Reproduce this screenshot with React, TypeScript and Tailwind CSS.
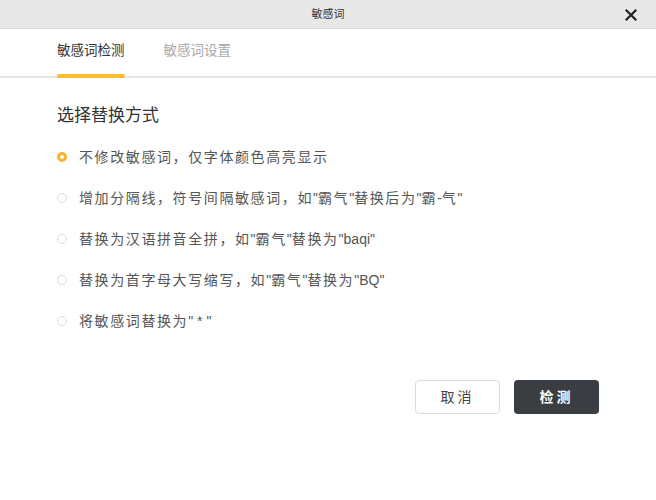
import { useState } from "react";

const font = { fontFamily: "'Liberation Sans', 'Noto Sans CJK SC', sans-serif" };

const options = [
  "不修改敏感词，仅字体颜色高亮显示",
  "增加分隔线，符号间隔敏感词，如\"霸气\"替换后为\"霸-气\"",
  "替换为汉语拼音全拼，如\"霸气\"替换为\"baqi\"",
  "替换为首字母大写缩写，如\"霸气\"替换为\"BQ\"",
  "将敏感词替换为\" * \"",
];

// latin runs keep normal spacing, CJK runs are spaced out a little
function Spaced({ text }: { text: string }) {
  return (
    <>
      {text.split(/([\x20-\x7e]+)/).map((part, i) =>
        /^[\x20-\x7e]+$/.test(part) ? (
          <span key={i} className="tracking-normal">{part}</span>
        ) : (
          <span key={i} className="tracking-[1.6px]">{part}</span>
        )
      )}
    </>
  );
}

export default function App() {
  const [tab, setTab] = useState(0);
  const [picked, setPicked] = useState(0);

  return (
    <div className="w-[656px] h-[500px] bg-white flex flex-col" style={font}>
      {/* title bar */}
      <div className="h-[29px] bg-[#e8e8e8] border-b border-[#d6d6d6] flex items-center justify-center relative">
        <span className="text-[11px] text-[#333]">敏感词</span>
        <button className="absolute right-[17px] top-[7px] w-4 h-4 flex items-center justify-center">
          <svg viewBox="0 0 12 12" className="w-[12px] h-[12px]">
            <path d="M1.5 1.5 L10.5 10.5 M10.5 1.5 L1.5 10.5" stroke="#222" strokeWidth="2.2" strokeLinecap="square" />
          </svg>
        </button>
      </div>

      {/* tabs */}
      <div className="flex gap-[39px] px-[57px] border-b-2 border-[#e6e6ea] h-[49px]">
        {["敏感词检测", "敏感词设置"].map((t, i) => (
          <button
            key={t}
            onClick={() => setTab(i)}
            className={`relative text-[13.5px] h-full flex items-center pb-[2px] ${tab === i ? "text-[#333]" : "text-[#a8a8a8]"}`}
          >
            {t}
            {tab === i && <span className="absolute left-0 right-0 bottom-[-2px] h-[4px] rounded-full bg-[#fbbc2e]" />}
          </button>
        ))}
      </div>

      {/* body */}
      <div className="px-[57px] pt-[26px]">
        <h2 className="text-[17px] text-[#333] leading-[24px]">选择替换方式</h2>
        <div className="mt-[18px] flex flex-col gap-[19px]">
          {options.map((o, i) => (
            <label key={i} className="flex items-center gap-[12px] h-[22px] cursor-pointer" onClick={() => setPicked(i)}>
              <span
                className={`w-[10px] h-[10px] rounded-full box-border ${picked === i ? "border-[3px] border-[#f7b52c]" : "border border-[#dcdcdc]"}`}
              />
              <span className="text-[14px] text-[#555] leading-[22px]">
                <Spaced text={o} />
              </span>
            </label>
          ))}
        </div>
      </div>

      {/* footer */}
      <div className="flex justify-end gap-[14px] pr-[57px] mt-[48px]">
        <button className="w-[85px] h-[34px] rounded border border-[#dcdcdc] bg-white text-[14px] text-[#444] tracking-[3px]">取消</button>
        <button className="w-[85px] h-[34px] rounded bg-[#3a3e42] text-[14px] text-white font-bold tracking-[3px]">检测</button>
      </div>
    </div>
  );
}
